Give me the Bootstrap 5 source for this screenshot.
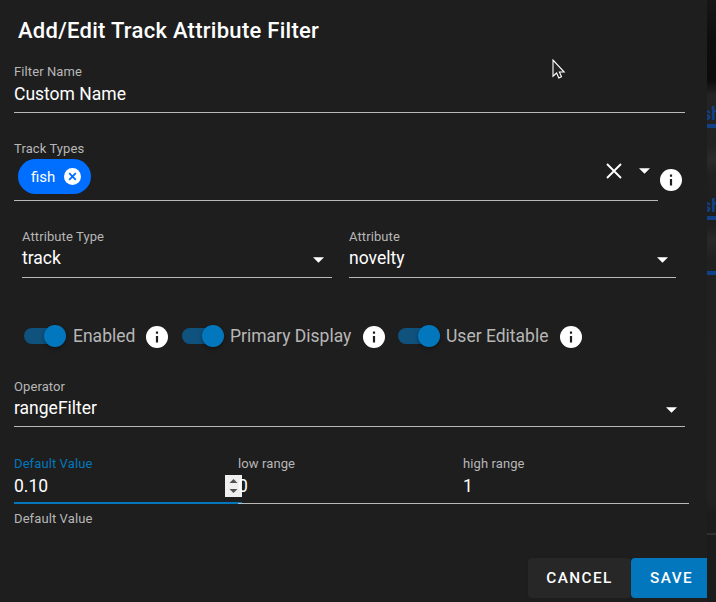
<!DOCTYPE html>
<html lang="en">
<head>
<meta charset="utf-8">
<meta name="viewport" content="width=device-width, initial-scale=1">
<title>Add/Edit Track Attribute Filter</title>
<link href="https://cdn.jsdelivr.net/npm/bootstrap@5.3.0/dist/css/bootstrap.min.css" rel="stylesheet">
<style>
body{width:716px;height:602px;background:#1e1e1e;color:#fff;font-family:Roboto,sans-serif;font-size:17.500px}
.dialog{width:707px;height:602px;background:#1e1e1e}
.dialog-title{height:62px;padding:0 0 0 18px;font-size:22px;font-weight:500;letter-spacing:.275px;line-height:1}
.field{border-bottom:1px solid #b9b9b9;height:51px}
.field-label{font-size:13px;line-height:20px;color:#b7b7b7;white-space:nowrap;letter-spacing:.1px}
.field-value{line-height:24px;font-size:17.500px}
.name-field{margin:0 22px 0 14px}
.types-row{margin:26px 25px 0 14px}
.types-field{width:644px;height:62px}
.fish-chip{height:35px;width:73px;background:#006fff;font-size:15px;margin-left:4px;padding:0 10px 0 13px;line-height:1;font-weight:400}
.fish-name{padding-top:2px}
.clear-icon{margin-right:14px}
.field-tools{margin-top:-11px;padding-right:8px}
.attr-row{margin:26px 31px 0 22px;gap:17px}
.attr-type{width:310px}
.attr-name{width:327px}
.attr-row .field-value,.operator .field-value{line-height:23px}
.attr-row .field-value svg,.operator .field-value svg{margin-top:2px}
.switch-row{margin:42px 0 0 24px;height:32px;color:#b7b7b7;line-height:24px;white-space:nowrap}
.toggle{width:42px;height:22px;flex:none}
.track{width:36px;height:16px;margin-top:3px;background:#0f527e;border-radius:8px}
.thumb{width:22px;height:22px;margin-left:-16px;background:#0277bd;border-radius:50%;box-shadow:0 2px 4px rgba(0,0,0,.35)}
.info{width:22px;height:22px;flex:none}
.switch-row .info{margin-top:2px}
.caption{margin-left:6px;flex:none}
.cap-one{margin-left:7px;width:73px}
.info-one{margin-right:14px}
.cap-two{width:133px}
.info-two{margin-right:13px}
.cap-three{width:114px}
.operator{margin:25px 22px 0 14px;height:50px}
.range-row{margin:27px 18px 0 14px}
.range-row .field{height:50px}
.default-field{width:228px;border-bottom:2px solid #0277bd}
.default-field .field-label{color:#0277bd}
.low-field{width:225px;margin-left:-4px;position:relative}
.spinner{width:17px;height:22px;background:#efefef}
.helper{margin:5px 0 0 14px}
.actions{margin-top:29px}
.action{height:40px;font-size:15.300px;font-weight:500;letter-spacing:1.400px;line-height:1;padding:1px 0 0;border:0;border-radius:4px;color:#fff}
.cancel{width:103px;background:#272727}
.save{width:76px;background:#0277bd;border-radius:4px 0 0 4px;padding-left:5px}
.backdrop{width:9px;height:602px;overflow:hidden;background:linear-gradient(#171717 0,#0e0e0e 40px,#0c0c0c 80px,#242424 95px,#222 145px,#2b2b2b 160px,#202020 175px,#1e1e1e 225px,#292929 240px,#202020 260px,#222 500px,#1c1c1c 515px,#1b1b1b 100%)}
.peek{font-size:18px;font-weight:700;line-height:20px;color:#104287;border-bottom:4px solid #104287;width:20px;height:24px;text-indent:-5px}
.peek-one{margin-top:104px}
.peek-two{margin-top:68px}
.peek-line{height:4px;background:#104287;margin-top:51px}
.peek-edge{height:2px;background:#303030;margin-top:258px}
.pointer{position:absolute;left:551px;top:59px}
</style>
</head>
<body class="overflow-hidden d-flex">
<svg width="0" height="0" class="position-absolute">
<symbol id="info" viewBox="0 0 22 22"><circle cx="11" cy="11" r="11" fill="#fff"/><path fill="#1e1e1e" d="M9.9 5.5h2.2v2.2H9.9zM9.9 9.9h2.2v6.6H9.9z"/></symbol>
<symbol id="caret" viewBox="0 0 12 6"><path d="M0 0h12L6 6z" fill="#fff"/></symbol>
</svg>
<main class="dialog flex-shrink-0">
<h1 class="dialog-title d-flex align-items-center m-0">Add/Edit Track Attribute Filter</h1>
<div class="field name-field"><div class="field-label">Filter Name</div><div class="field-value">Custom Name</div></div>
<div class="types-row d-flex justify-content-between align-items-center">
<div class="field types-field"><div class="field-label">Track Types</div>
<div class="d-flex justify-content-between align-items-center">
<span class="fish-chip rounded-pill d-flex align-items-center justify-content-between"><span class="fish-name">fish</span><svg width="17" height="17" viewBox="0 0 17 17"><circle cx="8.5" cy="8.5" r="8.5" fill="#fff"/><path d="M5.2 5.2l6.6 6.6M11.8 5.2l-6.6 6.6" stroke="#006fff" stroke-width="1.8"/></svg></span>
<div class="field-tools d-flex align-items-center"><svg class="clear-icon" width="22" height="22" viewBox="0 0 22 22"><path d="M4 4l14 14M18 4L4 18" stroke="#fff" stroke-width="1.9"/></svg><svg width="11" height="6"><use href="#caret"/></svg></div>
</div></div>
<svg class="info mt-4 mb-1"><use href="#info"/></svg>
</div>
<div class="attr-row d-flex">
<div class="field attr-type"><div class="field-label">Attribute Type</div><div class="field-value d-flex justify-content-between align-items-center pe-2">track<svg width="11" height="6"><use href="#caret"/></svg></div></div>
<div class="field attr-name"><div class="field-label">Attribute</div><div class="field-value d-flex justify-content-between align-items-center pe-2">novelty<svg width="11" height="6"><use href="#caret"/></svg></div></div>
</div>
<div class="switch-row d-flex align-items-center">
<span class="toggle d-flex"><i class="track"></i><i class="thumb"></i></span><span class="caption cap-one">Enabled</span><svg class="info info-one"><use href="#info"/></svg>
<span class="toggle d-flex"><i class="track"></i><i class="thumb"></i></span><span class="caption cap-two">Primary Display</span><svg class="info info-two"><use href="#info"/></svg>
<span class="toggle d-flex"><i class="track"></i><i class="thumb"></i></span><span class="caption cap-three">User Editable</span><svg class="info"><use href="#info"/></svg>
</div>
<div class="field operator"><div class="field-label">Operator</div><div class="field-value d-flex justify-content-between align-items-center pe-2">rangeFilter<svg width="11" height="6"><use href="#caret"/></svg></div></div>
<div class="range-row d-flex">
<div class="field default-field"><div class="field-label">Default Value</div><div class="field-value d-flex justify-content-between align-items-center">0.10<svg class="spinner" viewBox="0 0 17 22"><path d="M4.500 8L8.500 4l4 4zM4.500 14l4 4 4-4z" fill="#505050"/></svg></div></div>
<div class="field low-field"><div class="field-label">low range</div><div class="field-value">0</div></div>
<div class="field flex-grow-1"><div class="field-label">high range</div><div class="field-value">1</div></div>
</div>
<div class="field-label helper">Default Value</div>
<div class="actions d-flex justify-content-end"><button class="action cancel shadow-sm">CANCEL</button><button class="action save">SAVE</button></div>
</main>
<aside class="backdrop flex-shrink-0"><div class="peek peek-one">sh</div><div class="peek peek-two">sh</div><div class="peek-line"></div><div class="peek-edge"></div></aside>
<svg class="pointer" width="15" height="22" viewBox="0 0 15 22"><path d="M2 1v16.200l3.600-3.200 2.200 4.900 2.700-1.200-2.100-4.700h4.800z" fill="#242424" stroke="#fff" stroke-width="1.100"/></svg>
</body>
</html>
